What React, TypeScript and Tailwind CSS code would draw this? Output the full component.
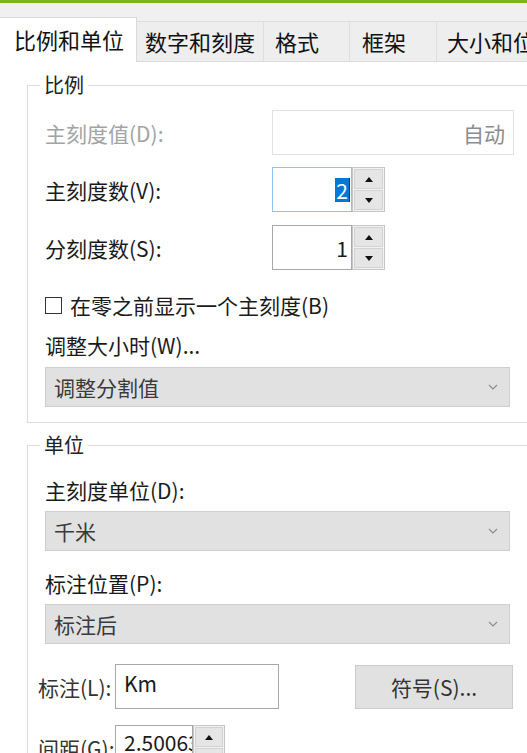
import React from "react";

const tabs = [
  { label: "比例和单位", w: "w-[137px]", pl: "pl-[14px]", active: true },
  { label: "数字和刻度", w: "w-[127px]", pl: "pl-[8px]", active: false },
  { label: "格式", w: "w-[86px]", pl: "pl-[11px]", active: false },
  { label: "框架", w: "w-[87px]", pl: "pl-[12px]", active: false },
  { label: "大小和位置", w: "w-[120px]", pl: "pl-[10px]", active: false },
];

function Chevron() {
  return (
    <svg width="10" height="6" viewBox="0 0 10 6" className="shrink-0">
      <polyline points="1,1 5,5 9,1" fill="none" stroke="#8a8a8a" strokeWidth="1.1" />
    </svg>
  );
}

function Arrow({ up }: { up?: boolean }) {
  return (
    <svg width="8" height="5" viewBox="0 0 8 5">
      <polygon points={up ? "0,5 4,0 8,5" : "0,0 8,0 4,5"} fill="#111" />
    </svg>
  );
}

function SpinButtons({ w }: { w: string }) {
  return (
    <div className={`${w} h-full flex flex-col gap-px border border-[#c6c6c6] bg-[#f2f2f2] p-px`}>
      <div className="flex-1 flex items-center justify-center bg-[#e5e5e5] border border-[#d3d3d3]">
        <Arrow up />
      </div>
      <div className="flex-1 flex items-center justify-center bg-[#e5e5e5] border border-[#d3d3d3]">
        <Arrow />
      </div>
    </div>
  );
}

function Select({ value }: { value: string }) {
  return (
    <div className="h-[40px] w-[465px] flex items-center justify-between bg-[#e1e1e1] border border-[#cfcfcf] pl-[8px] pr-[11px] text-[#3a3a3a]">
      <span>{value}</span>
      <Chevron />
    </div>
  );
}

export default function App() {
  return (
    <div className="w-[527px] h-[753px] overflow-hidden bg-white font-['Noto_Sans_CJK_SC',sans-serif] text-[21px] leading-[24px] text-[#1a1a1a]">
      <div className="h-[3px] bg-[#79b51b]" />

      {/* tab strip */}
      <div className="h-[59px] flex items-end bg-[#f0f0f0] border-b border-[#dadada]">
        {tabs.map((t) =>
          t.active ? (
            <div
              key={t.label}
              className={`${t.w} ${t.pl} shrink-0 h-[45px] -mb-px pb-[3px] flex items-center bg-white border-t border-r border-[#dadada] text-[22px] text-[#111]`}
            >
              {t.label}
            </div>
          ) : (
            <div
              key={t.label}
              className={`${t.w} ${t.pl} shrink-0 h-[40px] pb-[2px] flex items-center bg-[#eeeeee] border-t border-r border-[#dedede] text-[22px] text-[#111] whitespace-nowrap overflow-hidden`}
            >
              {t.label}
            </div>
          )
        )}
      </div>

      <div className="pl-[27px] pt-[11px]">
        {/* 比例 */}
        <fieldset className="w-[520px] border border-[#dcdcdc] p-0 m-0">
          <legend className="ml-[12px] px-[4px] text-[20px] leading-[24px] text-[#222]">比例</legend>
          <div className="pl-[17px] pt-[13px] pb-[15px] flex flex-col">
            <div className="h-[45px] flex items-center">
              <span className="w-[227px] text-[#a3a3a3]">主刻度值(D):</span>
              <div className="w-[242px] h-full flex items-center justify-end pr-[8px] border border-[#e2e2e2] text-[#8c8c8c]">
                自动
              </div>
            </div>

            <div className="mt-[12px] h-[45px] flex items-center">
              <span className="w-[227px]">主刻度数(V):</span>
              <div className="w-[80px] h-full flex items-center justify-end pr-[1px] border border-[#8fc3ee]">
                <span className="bg-[#0078d7] text-white leading-[24px] px-px">2</span>
                <span className="w-px h-[24px] bg-[#333]" />
              </div>
              <SpinButtons w="w-[33px]" />
            </div>

            <div className="mt-[13px] h-[45px] flex items-center">
              <span className="w-[227px]">分刻度数(S):</span>
              <div className="w-[80px] h-full flex items-center justify-end pr-[3px] border border-[#a8a8a8]">
                1
              </div>
              <SpinButtons w="w-[33px]" />
            </div>

            <div className="mt-[23px] h-[24px] flex items-center">
              <span className="w-[17px] h-[17px] border border-[#333] bg-white shrink-0" />
              <span className="ml-[8px]">在零之前显示一个主刻度(B)</span>
            </div>

            <div className="mt-[16px] h-[24px]">调整大小时(W)...</div>

            <div className="mt-[10px]">
              <Select value="调整分割值" />
            </div>
          </div>
        </fieldset>

        {/* 单位 */}
        <fieldset className="mt-[10px] w-[520px] border border-[#dcdcdc] p-0 m-0">
          <legend className="ml-[12px] px-[4px] text-[20px] leading-[24px] text-[#222]">单位</legend>
          <div className="pl-[17px] pt-[21px] pb-[20px] flex flex-col">
            <div className="h-[24px]">主刻度单位(D):</div>
            <div className="mt-[9px]">
              <Select value="千米" />
            </div>
            <div className="mt-[20px] h-[24px]">标注位置(P):</div>
            <div className="mt-[9px]">
              <Select value="标注后" />
            </div>

            <div className="-ml-[7px] mt-[20px] h-[45px] flex items-center">
              <span className="w-[77px] text-[#333]">标注(L):</span>
              <div className="w-[164px] h-full pl-[8px] pt-[6px] border border-[#a8a8a8]">Km</div>
              <div className="ml-[76px] w-[158px] h-[44px] flex items-center justify-center bg-[#e1e1e1] border border-[#cccccc] text-[#333]">
                符号(S)...
              </div>
            </div>

            <div className="-ml-[7px] mt-[16px] h-[45px] flex items-center">
              <span className="w-[77px] text-[#333]">间距(G):</span>
              <div className="w-[78px] h-full pl-[8px] pt-[4px] border border-[#a8a8a8] overflow-hidden whitespace-nowrap">
                2.500630
              </div>
              <SpinButtons w="w-[32px]" />
            </div>
          </div>
        </fieldset>
      </div>
    </div>
  );
}
